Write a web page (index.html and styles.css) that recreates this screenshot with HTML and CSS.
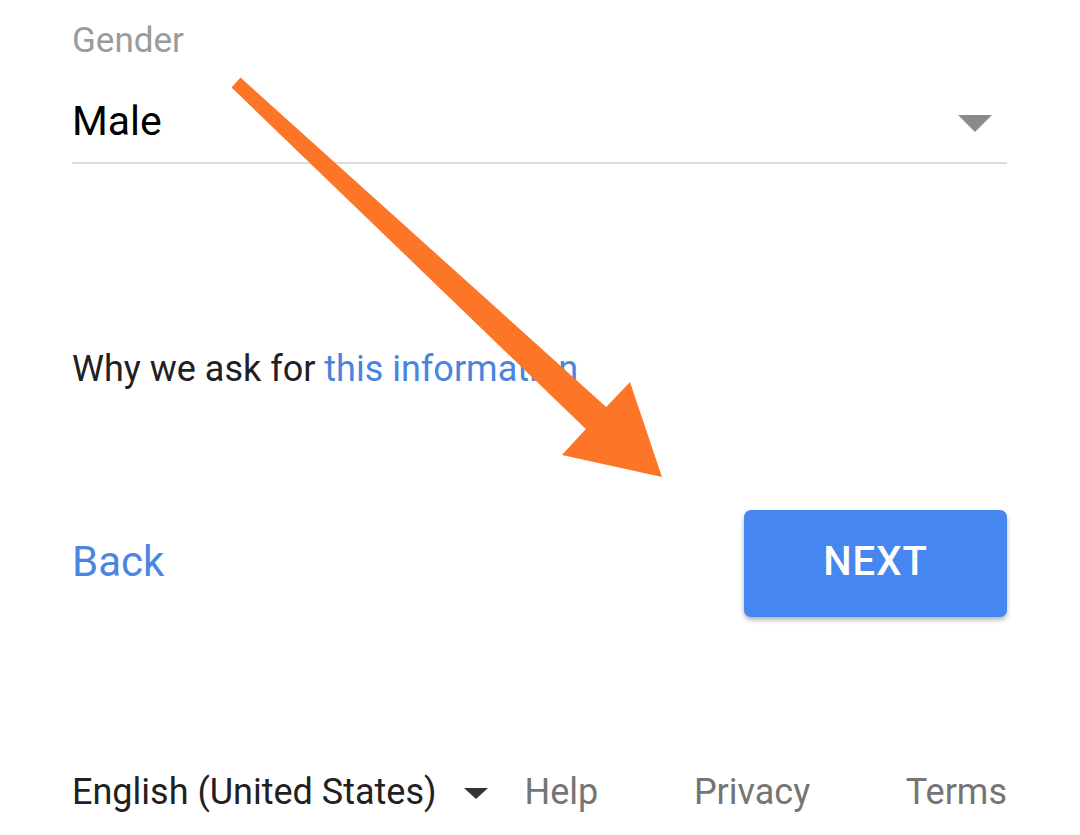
FILE: index.html
```html
<!DOCTYPE html>
<html lang="en">
<head>
<meta charset="utf-8">
<title>Gender</title>
<link rel="stylesheet" href="styles.css">
</head>
<body>
<main class="page">
  <section class="field">
    <div class="label">Gender</div>
    <div class="select">
      <span class="value">Male</span>
      <span class="caret"></span>
    </div>
  </section>
  <p class="why">Why we ask for <a href="#" class="link">this information</a></p>
  <div class="actions">
    <a href="#" class="back">Back</a>
    <button class="next" type="button">NEXT</button>
  </div>
  <footer class="footer">
    <div class="lang">
      <span>English (United States)</span>
      <span class="lang-caret"></span>
    </div>
    <nav class="links">
      <a href="#">Help</a>
      <a href="#">Privacy</a>
      <a href="#">Terms</a>
    </nav>
  </footer>
</main>
<svg class="arrow" width="1080" height="835" viewBox="0 0 1080 835" aria-hidden="true">
  <polygon fill="#fd7628" points="240.5,77.5 606.2,407 630,382 662,477 562,455 585.8,429 231.5,87.5"/>
</svg>
</body>
</html>
```

FILE: styles.css
```css
html, body {
  margin: 0;
  padding: 0;
  background: #ffffff;
}
body {
  font-family: Roboto, "Noto Sans", "Liberation Sans", sans-serif;
  color: #212121;
  width: 1080px;
  height: 835px;
  overflow: hidden;
  position: relative;
}
.page {
  padding: 21px 73px 0 72px;
  display: flex;
  flex-direction: column;
}
.label {
  font-size: 35px;
  line-height: 40px;
  color: #9b9b9b;
}
.select {
  margin-top: 36px;
  display: flex;
  align-items: center;
  justify-content: space-between;
  padding-bottom: 17px;
  border-bottom: 2px solid #dcdcdc;
}
.value {
  font-size: 41px;
  line-height: 48px;
  color: #000000;
}
.caret {
  width: 0;
  height: 0;
  border-left: 17px solid transparent;
  border-right: 17px solid transparent;
  border-top: 17px solid #8a8a8a;
  margin-right: 15px;
  margin-top: 4px;
}
.why {
  margin: 185px 0 0 0;
  font-size: 36px;
  line-height: 40px;
  color: #212121;
}
.link {
  color: #4a84dc;
  text-decoration: none;
}
.actions {
  margin-top: 121px;
  display: flex;
  align-items: center;
  justify-content: space-between;
}
.back {
  font-size: 42px;
  line-height: 48px;
  color: #4a86e0;
  text-decoration: none;
  padding-bottom: 4px;
}
.next {
  width: 263px;
  height: 107px;
  border: none;
  border-radius: 7px;
  background: #4586f0;
  color: #ffffff;
  font-family: Roboto, "Noto Sans", "Liberation Sans", sans-serif;
  font-size: 40px;
  font-weight: 500;
  letter-spacing: 1px;
  box-shadow: 0 3px 5px rgba(0, 0, 0, 0.3);
  padding: 0 0 4px 0;
}
.footer {
  margin-top: 155px;
  display: flex;
  align-items: center;
  font-size: 36px;
  line-height: 40px;
}
.lang {
  display: flex;
  align-items: center;
  color: #212121;
  margin-right: 37px;
}
.lang-caret {
  width: 0;
  height: 0;
  border-left: 12px solid transparent;
  border-right: 12px solid transparent;
  border-top: 11px solid #333333;
  margin-left: 27px;
  margin-top: 2px;
}
.links {
  flex: 1;
  display: flex;
  justify-content: space-between;
}
.links a {
  color: #757575;
  text-decoration: none;
}
.arrow {
  position: absolute;
  left: 0;
  top: 0;
  pointer-events: none;
}
```
